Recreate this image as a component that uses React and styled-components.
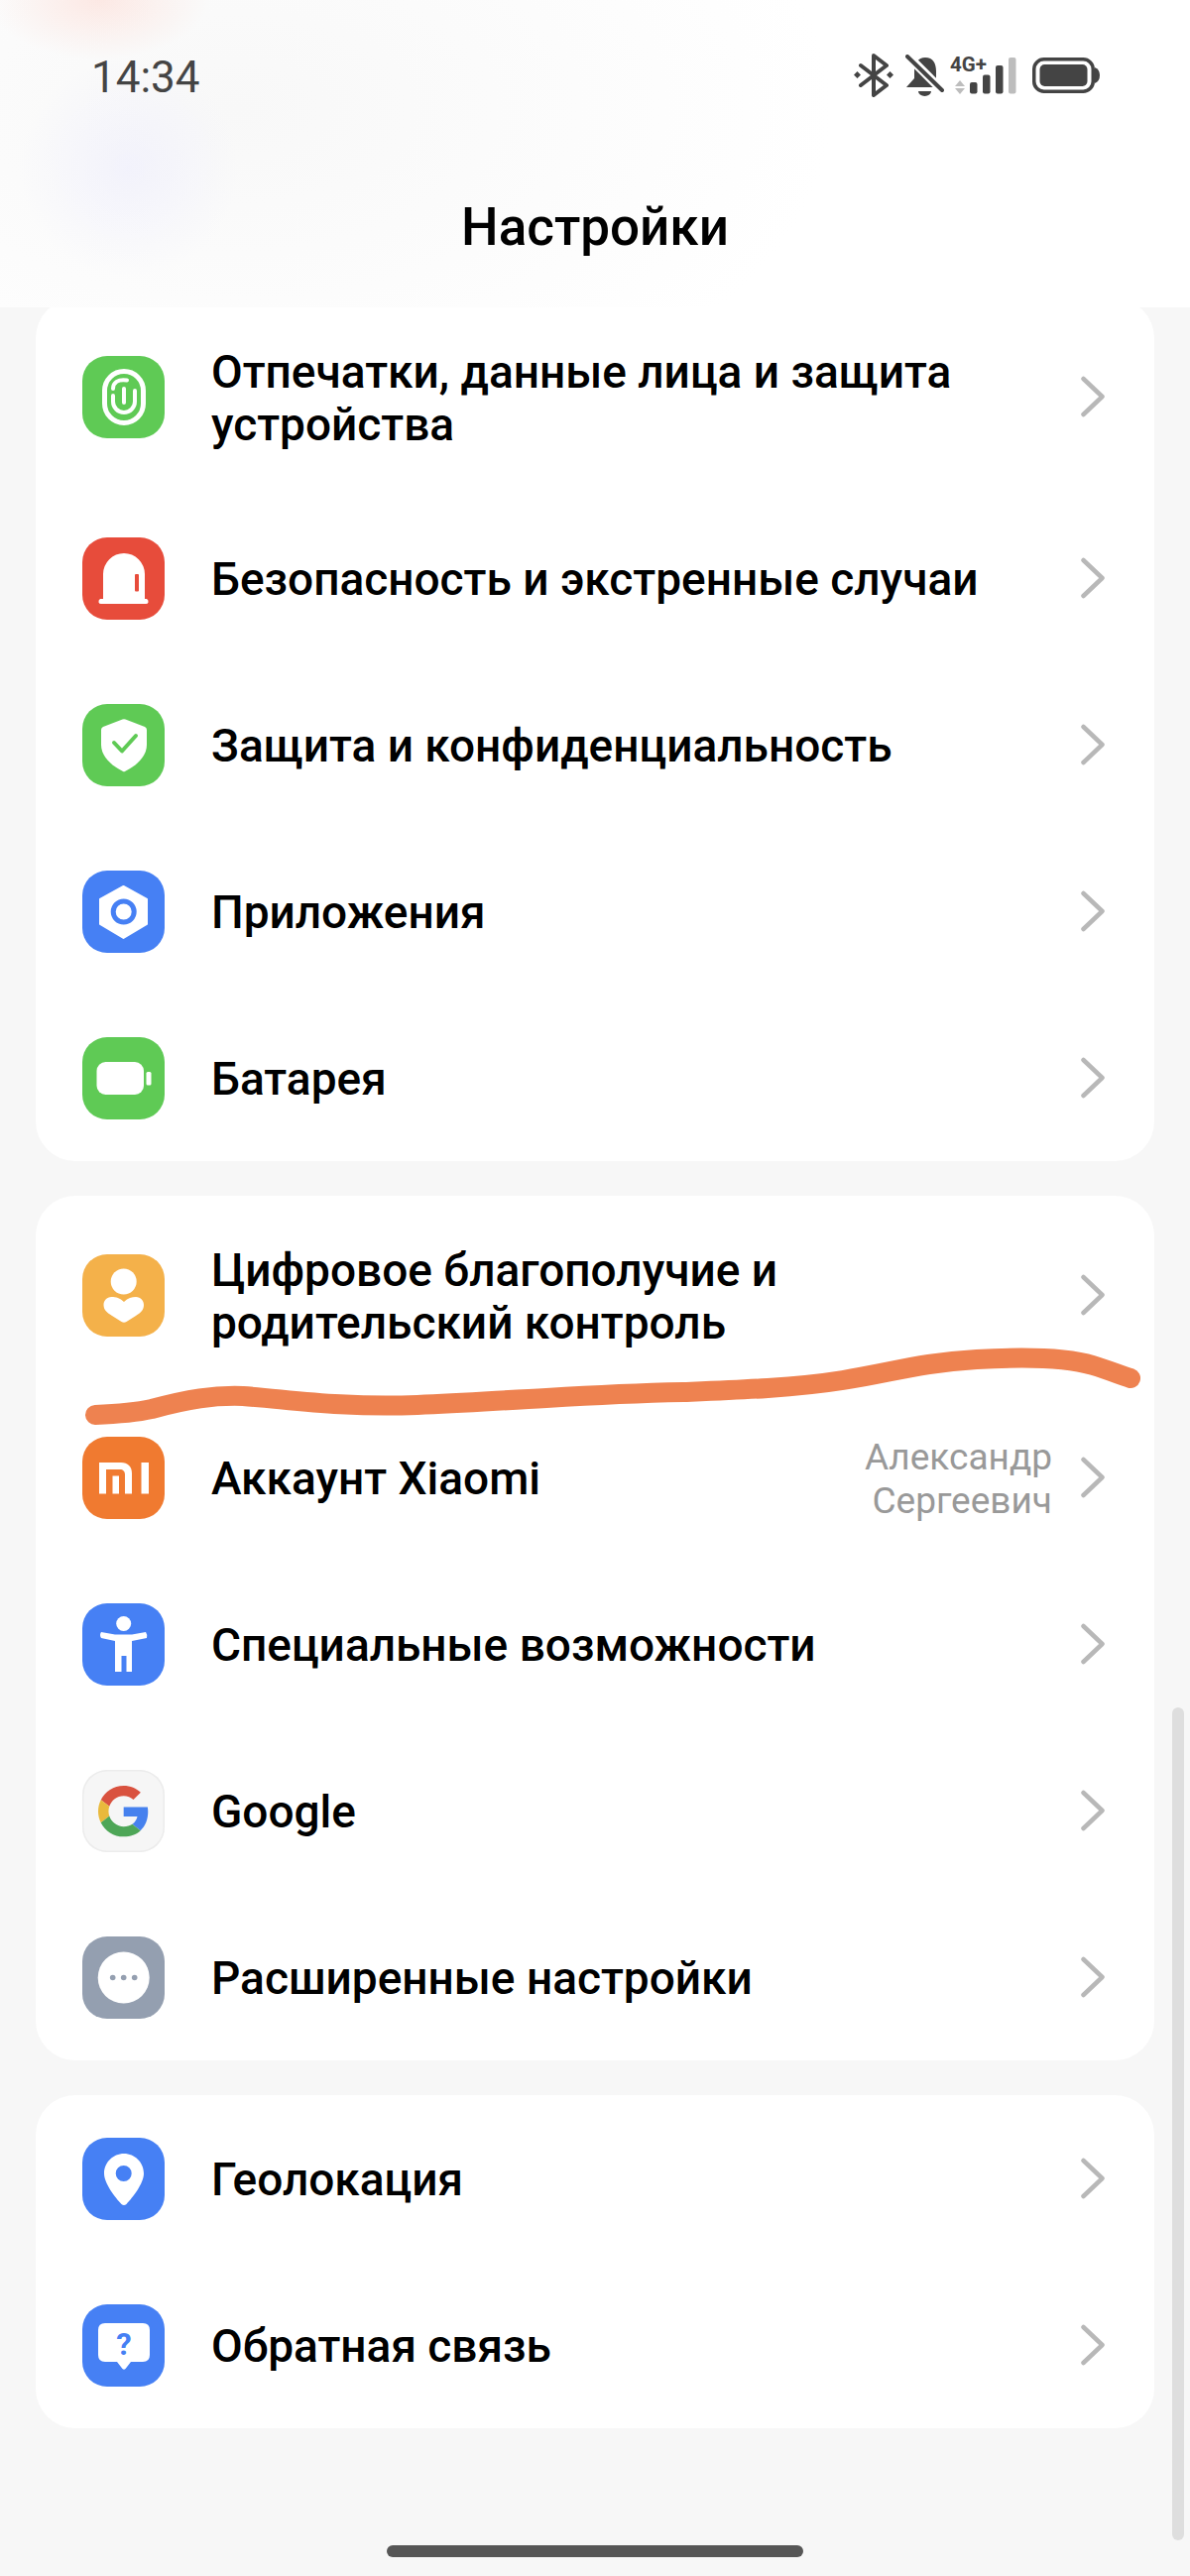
import React from 'react';
import styled, { createGlobalStyle } from 'styled-components';

const GlobalStyle = createGlobalStyle`
  html, body {
    margin: 0;
    padding: 0;
    background: #f7f7f7;
    font-family: Roboto, "Noto Sans", sans-serif;
  }
`;

const BLUE = '#4680f4';
const GREEN = '#5fca55';

const Glyph = ({ children }) => (
  <svg width="83" height="83" viewBox="0 0 83 83">{children}</svg>
);

const FingerprintIcon = () => (
  <Glyph>
    <g fill="none" stroke="#fff" strokeLinecap="round">
      <rect x="22.5" y="15.5" width="39" height="52" rx="19.5" strokeWidth="5" />
      <path d="M31 40V46A11 11 0 0 0 53 46V35" strokeWidth="4" />
      <path d="M31 33C31 27 36 23 45 24.5" strokeWidth="4" />
      <path d="M42 33V47" strokeWidth="4" />
    </g>
  </Glyph>
);

const AlarmIcon = () => (
  <Glyph>
    <path d="M21 62V37A21 21 0 0 1 63 37V62H65Q67 63 66.500 65.500Q66 67 64 67H19Q17 67 16.500 65.500Q16 63 18 62Z" fill="#fff" />
    <rect x="53" y="37" width="4" height="17.500" rx="1" fill="#e74c3b" />
  </Glyph>
);

const ShieldIcon = () => (
  <Glyph>
    <path d="M40.500 15.500Q42 15 43.500 15.500L63 23Q65 24 65 26V41C65 54 53 63 43 68Q42 68.500 41 68C31 63 19 54 19 41V26Q19 24 21 23Z" fill="#fff" />
    <path d="M32 39L40 47.500L54 32" fill="none" stroke={GREEN} strokeWidth="4" strokeLinecap="round" strokeLinejoin="round" />
  </Glyph>
);

const NutIcon = () => (
  <Glyph>
    <path d="M41.500 16L65 29V54L41.500 68L18 54V29Z" fill="#fff" stroke="#fff" strokeWidth="2" strokeLinejoin="round" />
    <circle cx="41.700" cy="41.500" r="10.500" fill="#fff" stroke={BLUE} strokeWidth="5" />
  </Glyph>
);

const BatteryGlyph = () => (
  <Glyph>
    <rect x="14.500" y="25" width="47.500" height="33" rx="9" fill="#fff" />
    <rect x="64.500" y="35" width="5" height="13.500" rx="1.500" fill="#fff" />
  </Glyph>
);

const WellbeingIcon = () => (
  <Glyph>
    <circle cx="41.700" cy="27.500" r="13" fill="#fff" />
    <path d="M42 48C38 44 34 43 29.500 43C24.500 43 21.500 47 21.500 51C21.500 56 25 59 30 62L39.500 68Q42 69.500 44.500 68L54 62C59 59 62 56 62 51C62 47 59 43 54 43C50 43 46 44 42 48Z" fill="#fff" />
  </Glyph>
);

const MiIcon = () => (
  <Glyph>
    <path d="M17 26H39C46 26 50 30 50 37V57.500H43V38C43 35 41 33 38 33H24V57.500H17Z" fill="#fff" />
    <rect x="30.500" y="39.500" width="6.500" height="18" fill="#fff" />
    <rect x="59.500" y="26" width="7.500" height="31.500" fill="#fff" />
  </Glyph>
);

const AccessIcon = () => (
  <Glyph>
    <circle cx="41.700" cy="20.500" r="7.500" fill="#fff" />
    <path d="M19 29L33 31.500H50L64 29Q66 32 65 35L50 38V69H44.500V53H39.500V69H33V38L19 35Q17 32 19 29Z" fill="#fff" />
  </Glyph>
);

const GoogleIcon = () => (
  <Glyph>
    <g transform="translate(16 16) scale(1.07)">
      <path d="M24 9.500c3.540 0 6.710 1.220 9.210 3.600l6.850-6.850C35.900 2.380 30.470 0 24 0 14.620 0 6.510 5.380 2.560 13.220l7.980 6.190C12.430 13.720 17.740 9.500 24 9.500z" fill="#d9523f" />
      <path d="M46.980 24.550c0-1.570-.15-3.090-.38-4.550H24v9.020h12.940c-.58 2.960-2.260 5.480-4.780 7.180l7.730 6c4.510-4.180 7.090-10.360 7.090-17.650z" fill="#4681ee" />
      <path d="M10.530 28.590c-.48-1.450-.76-2.990-.76-4.590s.27-3.140.76-4.590l-7.980-6.190C.92 16.460 0 20.120 0 24c0 3.880.92 7.540 2.560 10.780l7.970-6.190z" fill="#e9b93c" />
      <path d="M24 48c6.480 0 11.930-2.130 15.890-5.810l-7.730-6c-2.150 1.450-4.920 2.300-8.160 2.300-6.260 0-11.570-4.220-13.470-9.910l-7.980 6.190C6.510 42.620 14.620 48 24 48z" fill="#4ea657" />
    </g>
  </Glyph>
);

const MoreIcon = () => (
  <Glyph>
    <circle cx="41.700" cy="41.500" r="26" fill="#fff" />
    <circle cx="30.700" cy="41.500" r="2.800" fill="#949fb0" />
    <circle cx="41.700" cy="41.500" r="2.800" fill="#949fb0" />
    <circle cx="52.700" cy="41.500" r="2.800" fill="#949fb0" />
  </Glyph>
);

const PinIcon = () => (
  <Glyph>
    <path fillRule="evenodd" d="M42 16C31 16 22 25 22 36C22 46 33 60 39.500 67Q42 69 44.500 67C51 60 62 46 62 36C62 25 53 16 42 16ZM41.700 28A8 8 0 1 1 41.700 44A8 8 0 1 1 41.700 28Z" fill="#fff" />
  </Glyph>
);

const FeedbackIcon = () => (
  <Glyph>
    <path d="M23 19H61Q68 19 68 26V51Q68 58 61 58H49L43.500 65Q42 66.500 40.500 65L35 58H23Q16 58 16 51V26Q16 19 23 19Z" fill="#fff" />
    <text x="42" y="51" textAnchor="middle" fontFamily="Roboto, sans-serif" fontWeight="700" fontSize="31" fill={BLUE}>?</text>
  </Glyph>
);

const GROUPS = [
  [
    { id: 'prints', title: 'Отпечатки, данные лица и защита устройства', bg: GREEN, Icon: FingerprintIcon, h: 198 },
    { id: 'safety', title: 'Безопасность и экстренные случаи', bg: '#e74c3b', Icon: AlarmIcon },
    { id: 'privacy', title: 'Защита и конфиденциальность', bg: GREEN, Icon: ShieldIcon },
    { id: 'apps', title: 'Приложения', bg: BLUE, Icon: NutIcon },
    { id: 'battery', title: 'Батарея', bg: GREEN, Icon: BatteryGlyph },
  ],
  [
    { id: 'wellbeing', title: 'Цифровое благополучие и родительский контроль', bg: '#f4b14a', Icon: WellbeingIcon, h: 200 },
    { id: 'xiaomi', title: 'Аккаунт Xiaomi', bg: '#f07a30', Icon: MiIcon, value: 'Александр Сергеевич' },
    { id: 'access', title: 'Специальные возможности', bg: BLUE, Icon: AccessIcon },
    { id: 'google', title: 'Google', bg: '#f6f6f6', Icon: GoogleIcon, bordered: true },
    { id: 'more', title: 'Расширенные настройки', bg: '#949fb0', Icon: MoreIcon },
  ],
  [
    { id: 'geo', title: 'Геолокация', bg: BLUE, Icon: PinIcon },
    { id: 'feedback', title: 'Обратная связь', bg: BLUE, Icon: FeedbackIcon },
  ],
];

const App = () => (
  <>
    <GlobalStyle />
    <Page>
      <Header>
        <StatusBar>
          <Time>14:34</Time>
          <StatusIcons>
            <StatusSvg width="40" height="44" viewBox="0 0 40 44">
              <path d="M7 12L33 32L20 42V2L33 12L7 32" fill="none" stroke="#444" strokeWidth="4" strokeLinejoin="round" strokeLinecap="round" />
              <path d="M3.500 18L7 21.500L3.500 25L0 21.500Z M36.500 18L40 21.500L36.500 25L33 21.500Z" fill="#444" />
            </StatusSvg>
            <StatusSvg $gap={12} width="39" height="42" viewBox="0 0 39 42">
              <path d="M20 3C28 3 31 9 31 17V26L36 33H1L9 24V17C9 9 13 3 20 3Z" fill="#444" />
              <path d="M13 37H26A6.500 5 0 0 1 13 37Z" fill="#444" />
              <path d="M1 0L38 37" stroke="#fff" strokeWidth="9" />
              <path d="M2 2L37 36" stroke="#444" strokeWidth="4" strokeLinecap="round" />
            </StatusSvg>
            <StatusSvg $gap={6} width="67" height="50" viewBox="0 -5 67 50">
              <text x="0" y="16" fontFamily="Roboto, sans-serif" fontWeight="700" fontSize="20.500" fill="#444">4G+</text>
              <path d="M10 25L15 31H5Z M5 33H15L10 39Z" fill="#bdbdbd" />
              <rect x="20" y="27" width="7.500" height="11.500" rx="2" fill="#444" />
              <rect x="33" y="19.500" width="7.500" height="19" rx="2" fill="#444" />
              <rect x="46" y="10" width="7.500" height="28.500" rx="2" fill="#444" />
              <rect x="59" y="2" width="7.500" height="36.500" rx="2" fill="#bdbdbd" />
            </StatusSvg>
            <StatusSvg $gap={16} width="68" height="36" viewBox="0 0 68 36">
              <rect x="1.750" y="1.750" width="59.500" height="32.500" rx="10" fill="none" stroke="#444" strokeWidth="3.500" />
              <rect x="7.500" y="7" width="48" height="22" rx="5" fill="#444" />
              <path d="M63 10Q68 12 68 18Q68 24 63 26Z" fill="#444" />
            </StatusSvg>
          </StatusIcons>
        </StatusBar>
        <Title>Настройки</Title>
      </Header>

      <List>
        {GROUPS.map((group) => (
          <Card key={group[0].id}>
            {group.map(({ id, title, bg, Icon, h, value, bordered }) => (
              <Row key={id} $h={h}>
                <IconTile $bg={bg} $bordered={bordered}><Icon /></IconTile>
                <RowTitle>{title}</RowTitle>
                {value && <RowValue>{value}</RowValue>}
                <Chevron width="24" height="42" viewBox="0 0 24 42">
                  <path d="M2.500 3L21.500 21L2.500 39" fill="none" stroke="#b8b8b8" strokeWidth="4.500" strokeLinecap="round" strokeLinejoin="round" />
                </Chevron>
              </Row>
            ))}
          </Card>
        ))}
      </List>

      <Scribble width="1200" height="120" viewBox="0 1340 1200 120">
        <path
          d="M96 1427C120 1426 135 1425 153 1421C190 1411 215 1407 245 1408C290 1411 340 1420 421 1417C470 1415 510 1412 551 1410C600 1407 640 1405 689 1404C740 1402 800 1400 850 1392C900 1384 930 1374 985 1371C1035 1368 1075 1369 1102 1377C1118 1382 1128 1386 1140 1390"
          fill="none"
          stroke="#ee8250"
          strokeWidth="20"
          strokeLinecap="round"
          strokeLinejoin="round"
        />
      </Scribble>
      <ScrollThumb />
      <HomeBar />
    </Page>
  </>
);

const Page = styled.div`
  position: relative;
  width: 1200px;
  height: 2598px;
  overflow: hidden;
  background: #f7f7f7;
`;

const Header = styled.header`
  position: relative;
  z-index: 2;
  height: 310px;
  margin-bottom: -9px;
  box-sizing: border-box;
  padding-top: 54px;
  background:
    radial-gradient(ellipse 110px 60px at 100px 0px, rgba(255, 190, 175, 0.3), transparent),
    radial-gradient(ellipse 110px 110px at 130px 170px, rgba(228, 228, 255, 0.35), transparent),
    radial-gradient(ellipse 600px 340px at 240px 110px, #f8f8f8, transparent),
    #fff;
`;

const StatusBar = styled.div`
  display: flex;
  align-items: center;
  justify-content: space-between;
  height: 44px;
  padding: 0 91px 0 92px;
`;

const Time = styled.div`
  font-size: 44px;
  line-height: 44px;
  color: #444;
  margin-top: 3px;
`;

const StatusIcons = styled.div`
  display: flex;
  align-items: center;
`;

const StatusSvg = styled.svg`
  display: block;
  flex: none;
  margin-left: ${(p) => p.$gap || 0}px;
`;

const Title = styled.h1`
  margin: 101px 0 0;
  font-size: 53px;
  line-height: 60px;
  font-weight: 500;
  text-align: center;
  color: #000;
`;

const List = styled.main`
  display: flex;
  flex-direction: column;
  gap: 35px;
  padding: 0 36px;
`;

const Card = styled.section`
  background: #fff;
  border-radius: 40px;
  overflow: hidden;
`;

const Row = styled.div`
  display: flex;
  align-items: center;
  height: ${(p) => p.$h || 168}px;
  padding: 0 50px 0 47px;
`;

const IconTile = styled.div`
  flex: none;
  width: 83px;
  height: 83px;
  box-sizing: border-box;
  border-radius: 25px;
  background: ${(p) => p.$bg};
  box-shadow: ${(p) => (p.$bordered ? 'inset 0 0 0 1.5px #ececec' : 'none')};
  margin-right: 47px;

  svg {
    display: block;
  }
`;

const RowTitle = styled.div`
  flex: 1;
  padding: 3px 90px 0 0;
  font-size: 46px;
  line-height: 53px;
  font-weight: 500;
  color: #000;
`;

const RowValue = styled.div`
  flex: none;
  width: 216px;
  margin-right: 29px;
  padding-top: 3px;
  font-size: 37px;
  line-height: 44px;
  text-align: right;
  color: #999;
`;

const Chevron = styled.svg`
  display: block;
  flex: none;
`;

const Scribble = styled.svg`
  position: absolute;
  left: 0;
  top: 1340px;
  z-index: 3;
`;

const ScrollThumb = styled.div`
  position: absolute;
  left: 1182px;
  top: 1722px;
  width: 12px;
  height: 840px;
  border-radius: 6px;
  background: #dedede;
`;

const HomeBar = styled.div`
  position: absolute;
  left: 390px;
  top: 2567px;
  width: 420px;
  height: 12px;
  border-radius: 6px;
  background: #565656;
`;

export default App;
